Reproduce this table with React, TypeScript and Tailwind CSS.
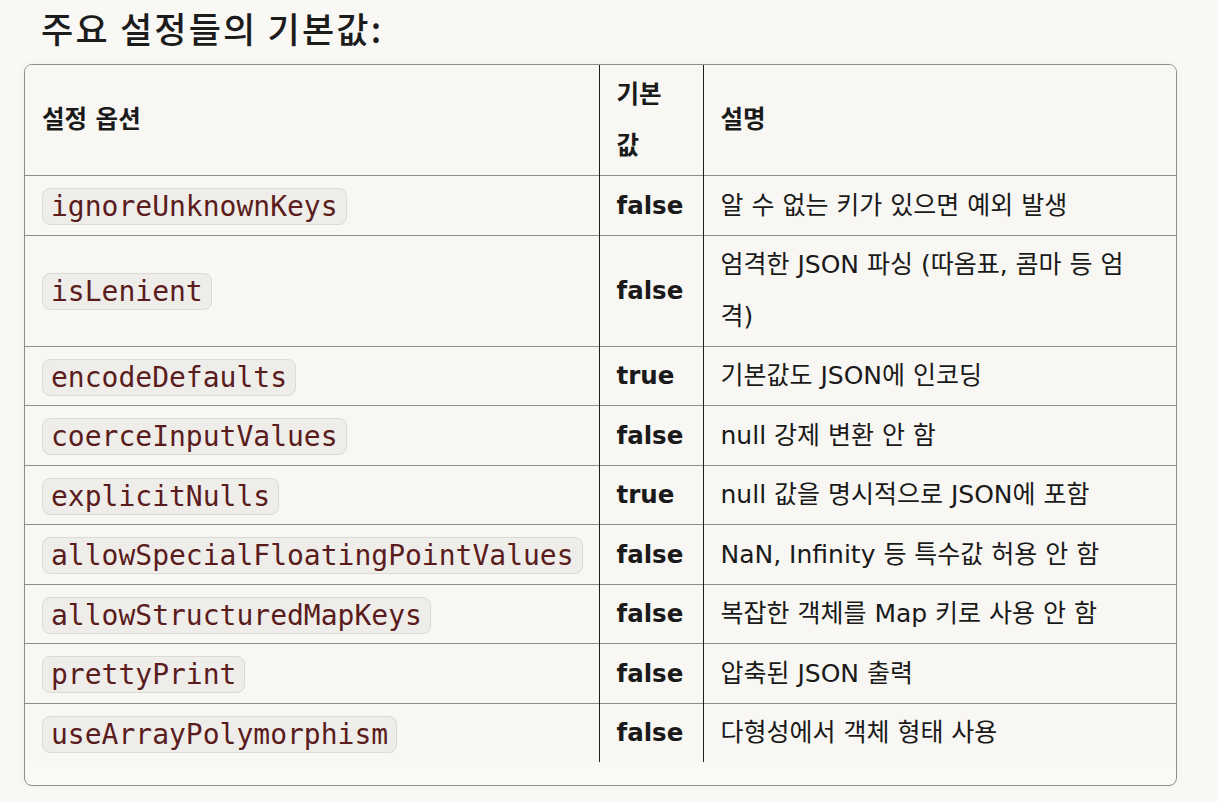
const rows: { key: string; value: string; desc: React.ReactNode }[] = [
  { key: "ignoreUnknownKeys", value: "false", desc: "알 수 없는 키가 있으면 예외 발생" },
  {
    key: "isLenient",
    value: "false",
    desc: (
      <>
        엄격한 JSON 파싱 (따옴표, 콤마 등 엄<br />격)
      </>
    ),
  },
  { key: "encodeDefaults", value: "true", desc: "기본값도 JSON에 인코딩" },
  { key: "coerceInputValues", value: "false", desc: "null 강제 변환 안 함" },
  { key: "explicitNulls", value: "true", desc: "null 값을 명시적으로 JSON에 포함" },
  { key: "allowSpecialFloatingPointValues", value: "false", desc: "NaN, Infinity 등 특수값 허용 안 함" },
  { key: "allowStructuredMapKeys", value: "false", desc: "복잡한 객체를 Map 키로 사용 안 함" },
  { key: "prettyPrint", value: "false", desc: "압축된 JSON 출력" },
  { key: "useArrayPolymorphism", value: "false", desc: "다형성에서 객체 형태 사용" },
];

const sans = "font-['DejaVu_Sans','Noto_Sans_CJK_KR',sans-serif]";

export default function App() {
  return (
    <div className={`min-h-[802px] w-[1218px] bg-[#f9f8f5] px-[24px] text-[#1a1a1a] ${sans}`}>
      <h2 className="pl-[17px] pt-[7px] text-[35px] leading-[42px] font-medium tracking-[2.2px] font-['Noto_Sans_CJK_KR',sans-serif] text-[#1c1c1c]">
        주요 설정들의 기본값:
      </h2>
      <div className="mt-[15px] w-[1153px] overflow-hidden rounded-[8px] border border-[#8f8e8a] bg-[#faf9f6] pb-[23px] shadow-[0_0_10px_rgba(0,0,0,0.04)]">
        <table className="w-full table-fixed border-collapse bg-[#f8f7f3] text-[25px] leading-[51.5px]">
          <colgroup>
            <col className="w-[574px]" />
            <col className="w-[104px]" />
            <col />
          </colgroup>
          <thead>
            <tr className="border-b border-[#8f8e8a]">
              <th className="px-[17px] py-[3.5px] text-left align-middle text-[24.5px] font-bold">
                설정 옵션
              </th>
              <th className="border-x border-[#1f1f1f] px-[17px] py-[3.5px] text-left align-middle text-[24.5px] font-bold">
                기본
                <br />값
              </th>
              <th className="px-[17px] py-[3.5px] text-left align-middle text-[24.5px] font-bold">설명</th>
            </tr>
          </thead>
          <tbody>
            {rows.map((r, i) => (
              <tr
                key={r.key}
                className={i < rows.length - 1 ? "border-b border-[#8f8e8a]" : ""}
              >
                <td className="px-[17px] py-[3px] align-middle">
                  <code className="inline-block rounded-[8px] border border-[#dcdad4] bg-[#efede9] px-[8px] align-middle font-['DejaVu_Sans_Mono',monospace] text-[28px] leading-[35px] text-[#5a1c1c]">
                    {r.key}
                  </code>
                </td>
                <td className="border-x border-[#1f1f1f] px-[17px] py-[3px] align-middle text-[24.5px] font-bold">
                  {r.value}
                </td>
                <td className="px-[17px] py-[3.5px] align-middle">{r.desc}</td>
              </tr>
            ))}
          </tbody>
        </table>
      </div>
    </div>
  );
}
